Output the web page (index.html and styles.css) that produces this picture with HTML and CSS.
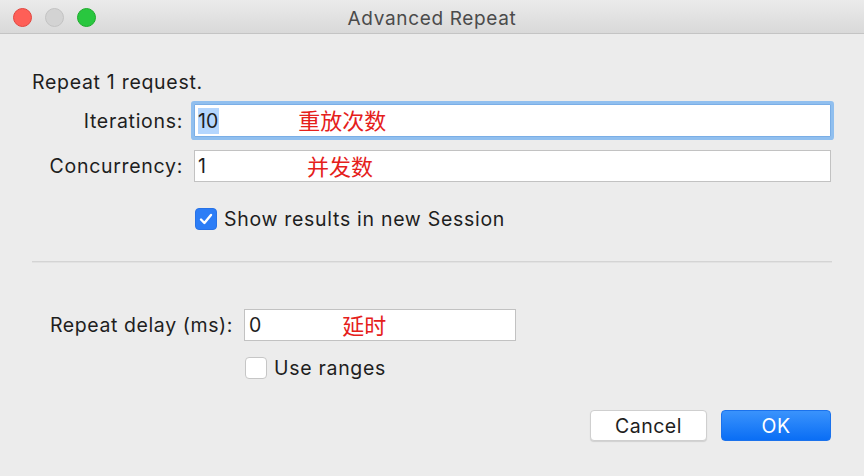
FILE: index.html
```html
<!DOCTYPE html>
<html lang="en">
<head>
<meta charset="utf-8">
<title>Advanced Repeat</title>
<link rel="stylesheet" href="styles.css">
</head>
<body>
<div class="window">
  <header class="titlebar">
    <div class="lights">
      <span class="light red"></span>
      <span class="light gray"></span>
      <span class="light green"></span>
    </div>
    <div class="title">Advanced Repeat</div>
  </header>
  <main class="content">
    <p class="intro">Repeat 1 request.</p>
    <div class="form-top">
      <label class="lbl">Iterations:</label>
      <div class="field focus"><span class="val sel">10</span><span class="note note-iter">重放次数</span></div>
      <label class="lbl">Concurrency:</label>
      <div class="field"><span class="val">1</span><span class="note note-conc">并发数</span></div>
      <div></div>
      <div class="check-row">
        <span class="cb checked"><svg viewBox="0 0 22 22" width="22" height="22"><path d="M6 11.5 L9.4 15 L16 7" fill="none" stroke="#fff" stroke-width="2.4" stroke-linecap="round" stroke-linejoin="round"/></svg></span>
        <span class="cb-label">Show results in new Session</span>
      </div>
    </div>
    <div class="sep"></div>
    <div class="form-bottom">
      <label class="lbl lbl-delay">Repeat delay (ms):</label>
      <div class="field small"><span class="val">0</span><span class="note note-delay">延时</span></div>
      <div></div>
      <div class="check-row ranges">
        <span class="cb"></span>
        <span class="cb-label">Use ranges</span>
      </div>
    </div>
    <div class="buttons">
      <button class="btn cancel">Cancel</button>
      <button class="btn ok">OK</button>
    </div>
  </main>
</div>
</body>
</html>
```
FILE: styles.css
```css
html, body {
  margin: 0;
  padding: 0;
}
body {
  width: 864px;
  height: 476px;
  overflow: hidden;
  background: #ececec;
  font-family: Inter, "Noto Sans CJK SC", sans-serif;
  color: #1e1e1e;
}
.window {
  width: 864px;
  height: 476px;
  background: #ececec;
}
.titlebar {
  height: 33px;
  border-bottom: 1px solid #c4c4c4;
  background: linear-gradient(#ebebeb, #d9d9d9);
  display: flex;
  align-items: center;
  position: relative;
}
.lights {
  display: flex;
  gap: 13px;
  padding-left: 13px;
  margin-top: 1px;
}
.light {
  width: 19px;
  height: 19px;
  border-radius: 50%;
  box-sizing: border-box;
}
.red { background: #fe5f57; border: 1px solid #e2463f; }
.gray { background: #d3d3d3; border: 1px solid #c3c3c3; }
.green { background: #29c73f; border: 1px solid #1eac2c; }
.title {
  position: absolute;
  left: 0;
  right: 0;
  top: 0;
  line-height: 37px;
  text-align: center;
  font-size: 19px;
  color: #4b4b4b;
  letter-spacing: 0.65px;
}
.content {
  padding: 36px 33px 0 32px;
}
.intro {
  margin: 0;
  font-size: 19.5px;
  line-height: 24px;
  letter-spacing: 0.7px;
}
.form-top {
  margin-top: 10px;
  display: grid;
  grid-template-columns: 150px 1fr;
  column-gap: 12px;
  row-gap: 13px;
  align-items: center;
}
.lbl {
  text-align: right;
  font-size: 19.5px;
  letter-spacing: 0.7px;
  line-height: 24px;
  margin-right: -1px;
}
.lbl-delay {
  letter-spacing: 0.6px;
}
.field {
  height: 32px;
  box-sizing: border-box;
  background: #fff;
  border: 1px solid #c2c2c2;
  display: flex;
  align-items: center;
  padding-left: 3px;
  font-size: 19.5px;
}
.field.focus {
  border-color: #7aaee6;
  border-radius: 1px;
  box-shadow: 0 0 0 3px #90bfef;
  height: 33px;
}
.val {
  line-height: 26px;
}
.sel {
  background: #b4d6fe;
  padding: 0 1px 0 0;
}
.note {
  color: #e5201b;
  font-family: "Noto Sans CJK SC", sans-serif;
  font-size: 22px;
  line-height: 26px;
  margin-top: -3px;
}
.note-iter { margin-left: 79px; }
.note-conc { margin-left: 101px; }
.note-delay { margin-left: 81px; }
.check-row {
  display: flex;
  align-items: center;
  gap: 7px;
  margin-top: 12px;
  padding-left: 1px;
}
.cb {
  width: 22px;
  height: 22px;
  box-sizing: border-box;
  border-radius: 4px;
  background: #fff;
  border: 1px solid #c6c6c6;
  display: flex;
}
.cb.checked {
  background: #2c7df6;
  border-color: #2872e6;
}
.cb.checked svg {
  margin: -1px;
}
.cb-label {
  font-size: 19.5px;
  letter-spacing: 0.7px;
  line-height: 24px;
}
.sep {
  margin-top: 30px;
  height: 1px;
  border-top: 1px solid #d4d4d4;
  background: #e2e2e2;
  margin-right: -1px;
}
.form-bottom {
  margin-top: 46px;
  display: grid;
  grid-template-columns: 200px 272px;
  column-gap: 12px;
  align-items: center;
}
.field.small {
  padding-left: 4px;
}
.ranges {
  margin-top: 15px;
}
.buttons {
  margin-top: 30px;
  display: flex;
  justify-content: flex-end;
  gap: 14px;
}
.btn {
  height: 31px;
  font-family: Inter, sans-serif;
  font-size: 19.5px;
  border-radius: 4px;
  box-sizing: border-box;
  padding: 0;
  letter-spacing: 0.5px;
}
.cancel {
  width: 117px;
  background: #fff;
  border: 1px solid #cfcfcf;
  box-shadow: 0 1px 1px rgba(0,0,0,0.12);
  color: #1e1e1e;
}
.ok {
  width: 110px;
  background: linear-gradient(#3a93fc, #0a6ef5);
  border: 1px solid #1b72ec;
  color: #fff;
}
```
